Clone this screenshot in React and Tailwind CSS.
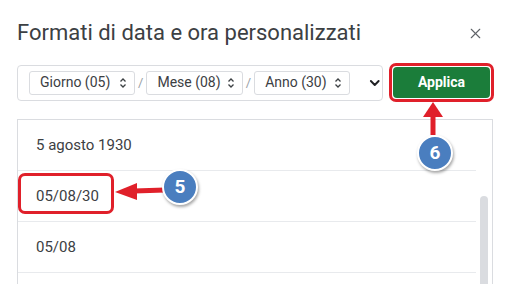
import { X, ChevronDown } from "lucide-react";

const UpDown = () => (
    <svg width="8" height="12" viewBox="0 0 8 12" className="ml-auto mr-[7px] shrink-0 text-[#3c4043]">
        <path d="M1.5 4.5 L4 2 L6.5 4.5 M1.5 7.5 L4 10 L6.5 7.5" fill="none" stroke="currentColor" strokeWidth="1.3" />
    </svg>
);

const Chip = ({ label, width }) => (
    <div className={`flex items-center h-[24px] ${width} pl-[10px] border border-[#dadce0] rounded-[3px] text-[14px] text-[#3c4043] whitespace-nowrap`}>
        <span>{label}</span>
        <UpDown />
    </div>
);

const Badge = ({ n, className }) => (
    <div className={`absolute w-[36px] h-[36px] rounded-full bg-[#4a7ebf] border-2 border-white shadow-[1px_2px_3px_rgba(0,0,0,0.35)] flex items-center justify-center text-white font-bold text-[19px] ${className}`}>
        {n}
    </div>
);

const rows = ["5 agosto 1930", "05/08/30", "05/08"];

export default function App() {
    return (
        <div className="relative w-[509px] h-[284px] bg-white overflow-hidden" style={{ fontFamily: "Roboto, 'Liberation Sans', sans-serif" }}>
            <div className="flex items-center justify-between pl-[17px] pr-[25px] pt-[19px] h-[47px]">
                <h1 className="text-[22px] text-[#3c4043] leading-none">Formati di data e ora personalizzati</h1>
                <X size={17} strokeWidth={1.6} className="text-[#5f6368]" />
            </div>

            <div className="flex items-center pl-[17px] mt-[16px]">
                <div className="flex items-center w-[366px] h-[36px] border border-[#dadce0] rounded-[4px] pl-[11px]">
                    <Chip label="Giorno (05)" width="w-[109px]" />
                    <span className="mx-[3px] text-[13px] text-[#9aa0a6]">/</span>
                    <Chip label="Mese (08)" width="w-[99px]" />
                    <span className="mx-[3px] text-[13px] text-[#9aa0a6]">/</span>
                    <Chip label="Anno (30)" width="w-[98px]" />
                    <ChevronDown size={16} strokeWidth={3} className="ml-[17px] text-[#202124]" />
                </div>
                <div className="ml-[6px] p-[1px] rounded-[7px] border-[3px] border-[#e0202a]">
                    <button className="w-[97px] h-[31px] rounded-[4px] bg-[#1b7d3a] text-white font-bold text-[14px]">Applica</button>
                </div>
            </div>

            <div className="ml-[17px] mt-[17px] w-[476px] h-[200px] border border-[#dadce0] relative">
                {rows.map((r, i) => (
                    <div key={i} className="h-[51px] mr-[16px] border-b border-[#e8eaed] flex items-center pl-[18px] text-[15px] text-[#3c4043]">
                        {r}
                    </div>
                ))}
                <div className="absolute right-[4px] top-[76px] w-[8px] h-[140px] rounded-full bg-[#dadce0]" />
            </div>

            {/* annotation for 05/08/30 */}
            <div className="absolute left-[18px] top-[173px] w-[96px] h-[41px] rounded-[7px] border-[3px] border-[#e0202a]" />
            <svg className="absolute left-[112px] top-[178px]" width="55" height="28" viewBox="0 0 55 28">
                <path d="M53 12 L22 13" stroke="#e0202a" strokeWidth="5" fill="none" />
                <path d="M3 14 L25 5 L25 22 Z" fill="#e0202a" />
            </svg>
            <Badge n="5" className="left-[162px] top-[169px]" />

            {/* annotation for Applica */}
            <svg className="absolute left-[420px] top-[101px]" width="26" height="36" viewBox="0 0 26 36">
                <path d="M13 34 L13 12" stroke="#e0202a" strokeWidth="5" fill="none" />
                <path d="M13 1 L3 16 L23 16 Z" fill="#e0202a" />
            </svg>
            <Badge n="6" className="left-[417px] top-[135px]" />
        </div>
    );
}
